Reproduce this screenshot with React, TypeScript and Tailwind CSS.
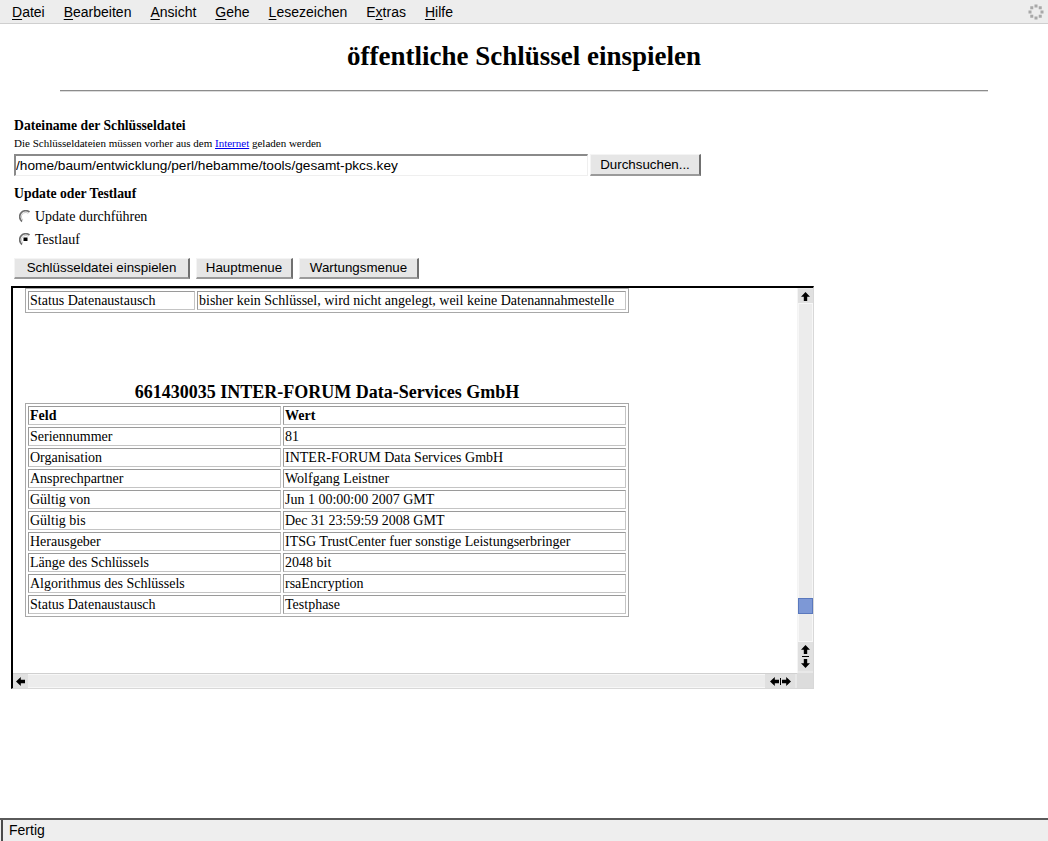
import React from "react";

const Throbber = () => (
  <svg width="18" height="18" viewBox="0 0 18 18">
    {Array.from({ length: 8 }).map((_, i) => {
      const a = (i * Math.PI) / 4;
      const x = 9 + 6 * Math.cos(a);
      const y = 9 + 6 * Math.sin(a);
      return <rect key={i} x={x - 1.5} y={y - 1.5} width="3" height="3" fill="#a8a8a8" />;
    })}
  </svg>
);

const Radio = ({ checked }: { checked?: boolean }) => (
  <svg width="13" height="13" viewBox="0 0 13 13" className="shrink-0">
    <path d="M3 11.5 A5.6 5.6 0 0 1 10.5 2" fill="none" stroke="#6e6e6e" strokeWidth="1.7" />
    <path d="M4 10 A4 4 0 0 1 9.2 3.4" fill="none" stroke="#c8c8c8" strokeWidth="1" />
    {checked && <rect x="4.5" y="4.5" width="4" height="3.5" fill="#000" />}
  </svg>
);

const Arrow = ({ dir }: { dir: "up" | "down" | "left" | "right" }) => {
  const rot = { up: 0, right: 90, down: 180, left: 270 }[dir];
  return (
    <svg width="9" height="9" viewBox="0 0 9 9" style={{ transform: `rotate(${rot}deg)` }}>
      <path d="M4.5 0 L9 4.8 L6.2 4.8 L6.2 9 L2.8 9 L2.8 4.8 L0 4.8 Z" fill="#000" />
    </svg>
  );
};

const cell =
  "border border-t-[#9a9a9a] border-l-[#9a9a9a] border-b-[#c4c4c4] border-r-[#c4c4c4] px-[1px] py-0 h-[19px] leading-[17px] text-[14px] text-left align-middle whitespace-nowrap";

const rows: [string, string][] = [
  ["Seriennummer", "81"],
  ["Organisation", "INTER-FORUM Data Services GmbH"],
  ["Ansprechpartner", "Wolfgang Leistner"],
  ["Gültig von", "Jun 1 00:00:00 2007 GMT"],
  ["Gültig bis", "Dec 31 23:59:59 2008 GMT"],
  ["Herausgeber", "ITSG TrustCenter fuer sonstige Leistungserbringer"],
  ["Länge des Schlüssels", "2048 bit"],
  ["Algorithmus des Schlüssels", "rsaEncryption"],
  ["Status Datenaustausch", "Testphase"],
];

const btn =
  "h-[21px] bg-[#e6e6e6] border border-t-[#f4f4f4] border-l-[#f4f4f4] border-r-2 border-b-2 border-r-[#707070] border-b-[#9a9a9a] font-['Liberation_Sans',sans-serif] text-[13.33px] leading-[18px] text-black";

const menu: [string, string][] = [
  ["D", "atei"],
  ["B", "earbeiten"],
  ["A", "nsicht"],
  ["G", "ehe"],
  ["L", "esezeichen"],
];

export default function App() {
  return (
    <div className="w-[1048px] h-[841px] flex flex-col bg-white overflow-hidden font-['Liberation_Serif',serif] text-black">
      {/* menu bar */}
      <div className="h-[24px] shrink-0 bg-[#ededed] border-b border-[#cfcfcf] flex items-center pl-3 pt-[2px] gap-[19px] font-['Liberation_Sans',sans-serif] text-[14px]">
        {menu.map(([u, r]) => (
          <span key={u + r}>
            <span className="underline underline-offset-2">{u}</span>
            {r}
          </span>
        ))}
        <span>
          E<span className="underline underline-offset-2">x</span>tras
        </span>
        <span>
          <span className="underline underline-offset-2">H</span>ilfe
        </span>
        <div className="flex-1" />
        <div className="mr-[3px] -mt-[2px] flex items-center">
          <Throbber />
        </div>
      </div>

      {/* page */}
      <div className="flex-1 relative">
        <h1 className="mt-[17px] text-center text-[27px] font-bold leading-[31px]">
          öffentliche Schlüssel einspielen
        </h1>
        <div className="mt-[18px] w-[928px] mx-auto h-[2px] border-t border-[#8c8c8c] border-b border-b-[#dcdcdc]" />

        <div className="pl-[14px]">
          <div className="mt-[26px] h-[16px] leading-[16px] text-[13.7px] font-bold">
            Dateiname der Schlüsseldatei
          </div>
          <div className="mt-[3px] h-[13px] leading-[13px] text-[11px]">
            Die Schlüsseldateien müssen vorher aus dem{" "}
            <a className="text-[#0000ee] underline" href="#">
              Internet
            </a>{" "}
            geladen werden
          </div>
          <div className="mt-[4px] h-[22px] flex">
            <div className="w-[574px] h-[22px] bg-white border-t-2 border-l-2 border-[#8a8a8a] border-r border-b border-r-[#efefef] border-b-[#efefef] font-['Liberation_Sans',sans-serif] text-[13.7px] leading-[19px] pl-0 overflow-hidden whitespace-nowrap">
              /home/baum/entwicklung/perl/hebamme/tools/gesamt-pkcs.key
            </div>
            <button className={btn + " ml-[2px] w-[111px] h-[22px]"}>Durchsuchen...</button>
          </div>
          <div className="mt-[10px] h-[16px] leading-[16px] text-[13.7px] font-bold">
            Update oder Testlauf
          </div>
          <div className="mt-[3px] h-[23px] flex items-center pl-[5px] gap-[3px] text-[14px]">
            <Radio />
            <span>Update durchführen</span>
          </div>
          <div className="h-[23px] flex items-center pl-[5px] gap-[3px] text-[14px]">
            <Radio checked />
            <span>Testlauf</span>
          </div>
          <div className="mt-[7px] flex gap-[6px]">
            <button className={btn + " w-[176px]"}>Schlüsseldatei einspielen</button>
            <button className={btn + " w-[97px]"}>Hauptmenue</button>
            <button className={btn + " w-[120px]"}>Wartungsmenue</button>
          </div>

          {/* iframe */}
          <div className="mt-[7px] -ml-[3px] w-[803px] h-[403px] border-t-2 border-l-2 border-black border-r border-b border-r-[#d8d8d8] border-b-[#d8d8d8] flex flex-col">
            <div className="flex h-[385px]">
              <div className="flex-1 overflow-hidden">
                <div className="ml-[12px]">
                  <table className="w-[604px] border-separate border-spacing-[2px] border border-[#a8a8a8]">
                    <tbody>
                      <tr>
                        <td className={cell + " w-[167px]"}>Status Datenaustausch</td>
                        <td className={cell}>bisher kein Schlüssel, wird nicht angelegt, weil keine Datenannahmestelle</td>
                      </tr>
                    </tbody>
                  </table>
                  <div className="h-[69px]" />
                  <table className="w-[604px] border-separate border-spacing-[2px] border border-[#a8a8a8]">
                    <caption className="text-[18px] font-bold leading-[21px] h-[21px]">
                      661430035 INTER-FORUM Data-Services GmbH
                    </caption>
                    <tbody>
                      <tr>
                        <td className={cell + " w-[253px] font-bold"}>Feld</td>
                        <td className={cell + " font-bold"}>Wert</td>
                      </tr>
                      {rows.map(([a, b]) => (
                        <tr key={a}>
                          <td className={cell}>{a}</td>
                          <td className={cell}>{b}</td>
                        </tr>
                      ))}
                    </tbody>
                  </table>
                </div>
              </div>
              {/* vertical scrollbar */}
              <div className="w-[16px] bg-[#e8e8e8] border-l border-[#f4f4f4] flex flex-col">
                <div className="h-[15px] mt-[1px] bg-[#e0e0e0] border-b border-[#f8f8f8] flex items-center justify-center">
                  <Arrow dir="up" />
                </div>
                <div className="h-[294px] bg-[#ececec] border-x border-[#f7f7f7]" />
                <div className="h-[16px] bg-[#7d98d6] border border-[#5a78bd]" />
                <div className="flex-1 bg-[#ececec] border-x border-[#f7f7f7]" />
                <div className="h-[30px] bg-[#e0e0e0] border-t border-[#f8f8f8] flex flex-col items-center justify-center gap-[2px]">
                  <Arrow dir="up" />
                  <div className="w-[7px] h-px bg-black" />
                  <Arrow dir="down" />
                </div>
                <div className="h-[2px]" />
              </div>
            </div>
            {/* horizontal scrollbar */}
            <div className="h-[15px] flex">
              <div className="flex-1 flex bg-[#e8e8e8] border-t border-[#d0d0d0]">
                <div className="w-[15px] bg-[#e0e0e0] flex items-center justify-center">
                  <Arrow dir="left" />
                </div>
                <div className="flex-1 bg-[#ececec] border-y border-[#f7f7f7]" />
                <div className="w-[30px] bg-[#e0e0e0] flex items-center justify-center gap-[1px] mr-[2px]">
                  <Arrow dir="left" />
                  <div className="w-px h-[7px] bg-black" />
                  <Arrow dir="right" />
                </div>
              </div>
              <div className="w-[16px] bg-[#dcdcdc]" />
            </div>
          </div>
        </div>
      </div>

      {/* status bar */}
      <div className="h-[23px] shrink-0 border-t-2 border-[#5a5a5a] bg-[#eeeeee] flex">
        <div className="flex-1 border-l-2 border-[#4a4a4a] ml-px flex items-center pl-[6px] font-['Liberation_Sans',sans-serif] text-[14px]">
          Fertig
        </div>
      </div>
    </div>
  );
}
